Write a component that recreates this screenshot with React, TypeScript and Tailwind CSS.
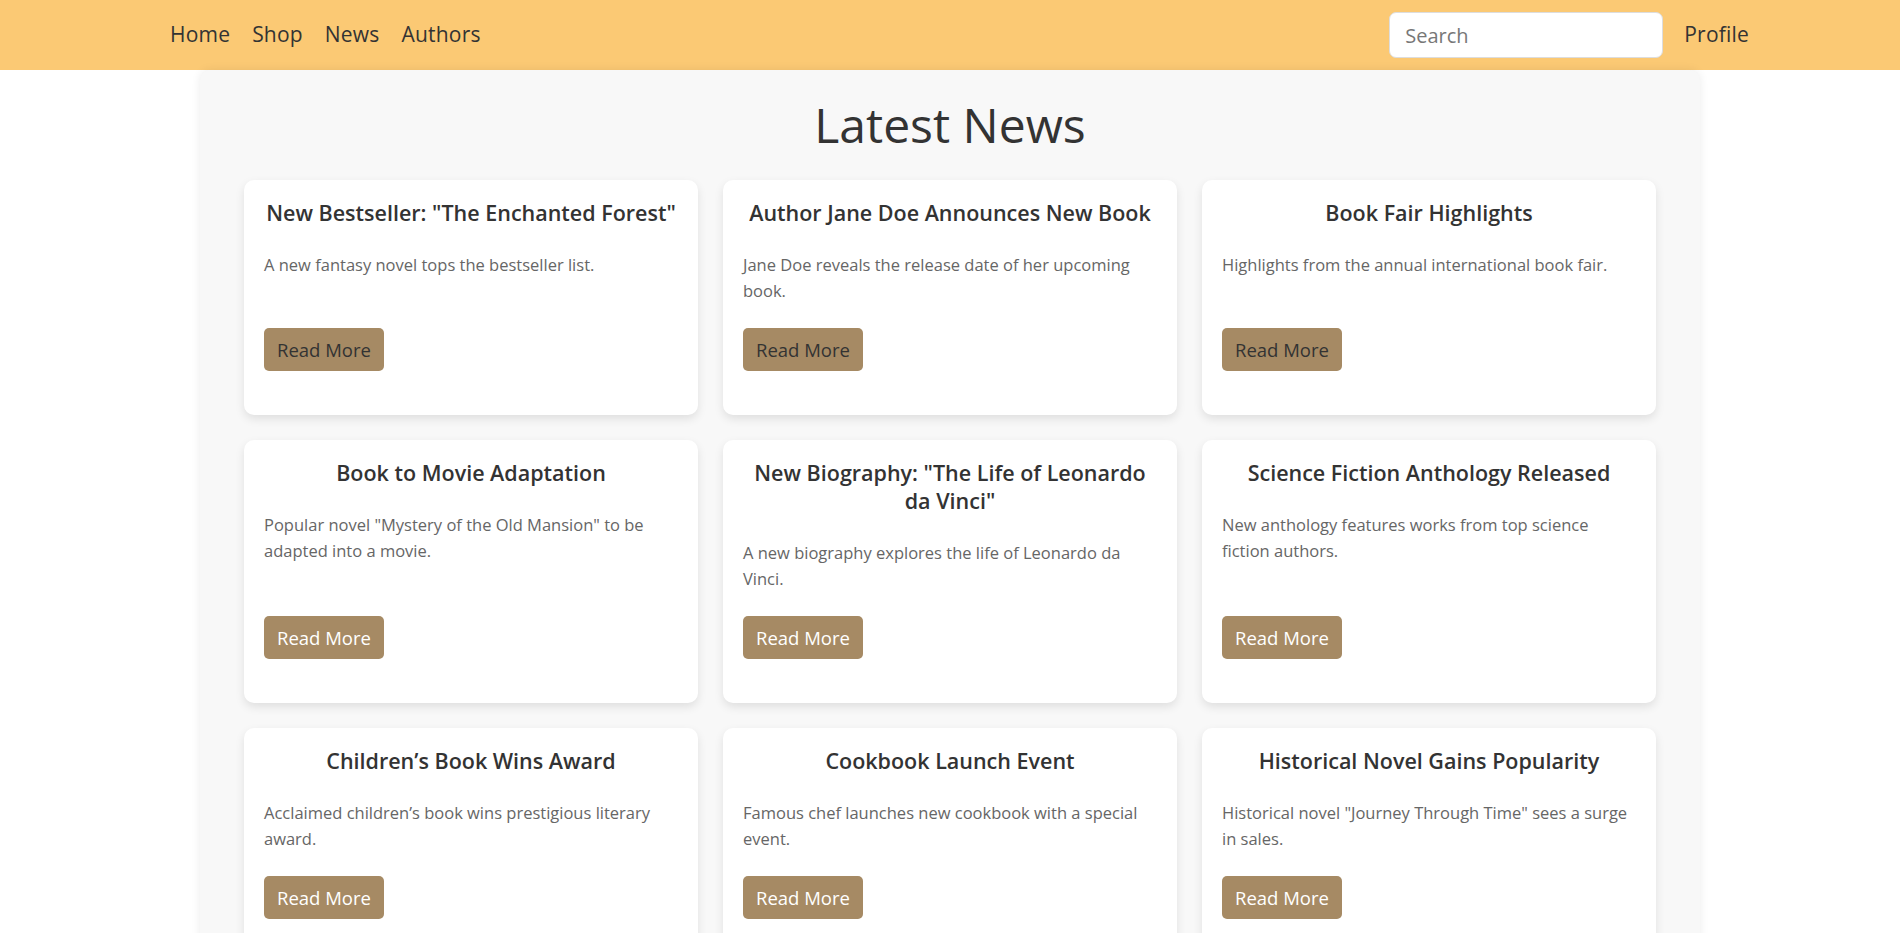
import React from "react";

type NewsItem = {
  title: string;
  text: string;
  dark?: boolean;
};

const news: NewsItem[] = [
  { title: 'New Bestseller: "The Enchanted Forest"', text: "A new fantasy novel tops the bestseller list.", dark: true },
  { title: "Author Jane Doe Announces New Book", text: "Jane Doe reveals the release date of her upcoming book.", dark: true },
  { title: "Book Fair Highlights", text: "Highlights from the annual international book fair.", dark: true },
  { title: "Book to Movie Adaptation", text: 'Popular novel "Mystery of the Old Mansion" to be adapted into a movie.' },
  { title: 'New Biography: "The Life of Leonardo da Vinci"', text: "A new biography explores the life of Leonardo da Vinci." },
  { title: "Science Fiction Anthology Released", text: "New anthology features works from top science fiction authors." },
  { title: "Children\u2019s Book Wins Award", text: "Acclaimed children\u2019s book wins prestigious literary award." },
  { title: "Cookbook Launch Event", text: "Famous chef launches new cookbook with a special event." },
  { title: "Historical Novel Gains Popularity", text: 'Historical novel "Journey Through Time" sees a surge in sales.' },
];

const navLinks = ["Home", "Shop", "News", "Authors"];

function NewsCard({ item }: { item: NewsItem }) {
  return (
    <div className="flex flex-col bg-white rounded-[10px] shadow-[0_4px_10px_rgba(0,0,0,0.1)] px-5 pt-[19px] pb-[44px]">
      <h3 className="text-center text-[21.5px] leading-[28px] font-semibold text-[#333]">{item.title}</h3>
      <p className="mt-[25px] text-[16.5px] leading-[26px] text-[#666]">{item.text}</p>
      <div className="mt-auto pt-[24px]">
        <button
          className={
            "bg-[#a68a64] rounded-[5px] px-[13px] py-[9px] text-[18.5px] leading-[25px] " +
            (item.dark ? "text-[#333]" : "text-white")
          }
        >
          Read More
        </button>
      </div>
    </div>
  );
}

export default function App() {
  return (
    <div className="min-h-screen bg-white font-['Open_Sans',sans-serif]">
      <nav className="h-[70px] bg-[#fbc974] flex items-center justify-between pl-[170px] pr-[151px]">
        <ul className="flex items-center gap-[22px] text-[21px] tracking-[0.2px] text-[#333]">
          {navLinks.map((l) => (
            <li key={l}>
              <a href="#">{l}</a>
            </li>
          ))}
        </ul>
        <div className="flex items-center gap-[21px]">
          <input
            type="text"
            placeholder="Search"
            className="w-[274px] h-[46px] bg-white border border-[#ddd] rounded-[7px] px-[15px] text-[20px] text-[#333] placeholder:text-[#777] outline-none"
          />
          <a href="#" className="text-[21px] tracking-[0.2px] text-[#333]">
            Profile
          </a>
        </div>
      </nav>

      <main className="w-[1500px] mx-auto bg-[#f8f8f8] rounded-t-[10px] shadow-[0_0_10px_rgba(0,0,0,0.08)] px-[44px] pt-[27px] pb-10">
        <h1 className="text-center text-[48px] leading-[56px] font-medium text-[#333]">Latest News</h1>
        <div className="mt-[27px] grid grid-cols-3 gap-x-[25px] gap-y-[25px]">
          {news.map((item) => (
            <NewsCard key={item.title} item={item} />
          ))}
        </div>
      </main>
    </div>
  );
}
